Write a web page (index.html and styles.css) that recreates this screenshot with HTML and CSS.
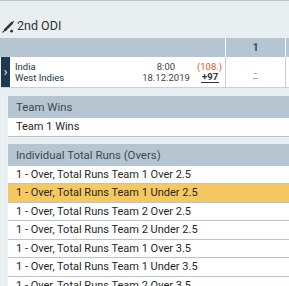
FILE: index.html
```html
<!DOCTYPE html>
<html>
  <head>
    <title>2nd ODI</title>
    <link rel="stylesheet" href="styles.css">
  </head>
  <body>
    <div class="page">
      <div class="title">
        <svg class="bat" width="12" height="12" viewBox="0 0 12 12">
          <path d="M11.4 0.6 L9.6 2.4" stroke="#333" stroke-width="1.2" stroke-linecap="round" />
          <path d="M9.8 2.2 L3.2 8.8" stroke="#333" stroke-width="2.6" stroke-linecap="round" />
          <path d="M2.6 9.4 L0.8 11.2" stroke="#333" stroke-width="1.2" stroke-linecap="round" />
          <circle cx="9.6" cy="10.2" r="1.4" fill="#333" />
        </svg>
        <span>2nd ODI</span>
      </div>

      <div class="table">
        <div class="thead">
          <div class="info"></div>
          <div class="col">1</div>
          <div class="col"></div>
        </div>
        <div class="match">
          <div class="info">
            <div class="strip">&#8250;</div>
            <div class="teams">
              <div>India</div>
              <div>West Indies</div>
            </div>
            <div class="time">
              <div>8:00</div>
              <div>18.12.2019</div>
            </div>
            <div class="extra">
              <div class="count">(108.)</div>
              <div class="more">+97</div>
            </div>
          </div>
          <div class="col"><span class="odd">-</span></div>
          <div class="col"></div>
        </div>
      </div>

      <div class="markets">
        <div class="market">
          <div class="market-head">Team Wins</div>
          <div class="market-row">Team 1 Wins</div>
        </div>

        <div class="market">
          <div class="market-head">Individual Total Runs (Overs)</div>
          <div class="market-row">1 - Over, Total Runs Team 1 Over 2.5</div>
          <div class="market-row selected">1 - Over, Total Runs Team 1 Under 2.5</div>
          <div class="market-row">1 - Over, Total Runs Team 2 Over 2.5</div>
          <div class="market-row">1 - Over, Total Runs Team 2 Under 2.5</div>
          <div class="market-row">1 - Over, Total Runs Team 1 Over 3.5</div>
          <div class="market-row">1 - Over, Total Runs Team 1 Under 3.5</div>
          <div class="market-row">1 - Over, Total Runs Team 2 Over 3.5</div>
        </div>
      </div>
    </div>
  </body>
</html>
```

FILE: styles.css
```css
body {
  margin: 0;
  background-color: #e9eef0;
  font-family: Roboto, "Liberation Sans", Arial, sans-serif;
  color: #333;
  overflow: hidden;
}
.page {
  border-top: 1px solid #b6c6d2;
  width: 360px;
}
.title {
  height: 37px;
  display: flex;
  align-items: flex-end;
  padding-left: 2px;
  box-sizing: border-box;
  padding-bottom: 5px;
  font-size: 12.5px;
}
.bat {
  margin-right: 3px;
}

/* event table */
.thead,
.match {
  display: flex;
}
.thead {
  height: 19px;
  background-color: #b5c6d2;
}
.info {
  flex: 0 0 225px;
  display: flex;
  align-items: center;
}
.col {
  flex: 0 0 59px;
  border-left: 1px solid #fff;
  display: flex;
  justify-content: center;
  align-items: center;
  font-size: 10px;
  font-weight: bold;
  color: #2e4656;
}
.match {
  height: 30px;
  background-color: #fff;
  border-bottom: 1px solid #c4d2dc;
  margin-left: 1px;
}
.match .info {
  flex-basis: 224px;
}
.match .col {
  border-left-color: #c4d2dc;
}
.strip {
  width: 9px;
  height: 100%;
  background-color: #1f3a50;
  color: #fff;
  font-size: 12px;
  display: flex;
  align-items: center;
  justify-content: center;
}
.teams {
  flex: 1;
  padding-left: 5px;
  font-size: 9.5px;
  line-height: 11px;
  color: #24323c;
}
.time {
  width: 52px;
  text-align: center;
  font-size: 9.5px;
  line-height: 11px;
  color: #444;
}
.extra {
  width: 33px;
  padding-left: 5px;
  box-sizing: border-box;
  font-size: 9.5px;
  line-height: 10px;
}
.count {
  color: #e2542c;
}
.more {
  display: inline-block;
  margin-left: 4px;
  padding: 0 1px;
  border-bottom: 1px solid #333;
  font-weight: bold;
  color: #333;
}
.odd {
  display: inline-block;
  width: 5px;
  text-align: center;
  line-height: 9px;
  margin-top: 3px;
  font-size: 11px;
  font-weight: normal;
  color: #e0702c;
  border-bottom: 1px solid #e39a60;
}

/* markets */
.markets {
  margin-top: 8px;
  margin-left: 2px;
  padding-left: 5px;
  border-left: 1px solid #f3f6f8;
}
.market {
  margin-bottom: 7px;
}
.market-head {
  height: 22px;
  line-height: 22px;
  padding-left: 8px;
  background-color: #b5c6d2;
  font-size: 11.4px;
  color: #3c4850;
}
.market-row {
  height: 17.5px;
  line-height: 17.5px;
  padding-left: 8px;
  background-color: #fff;
  border-bottom: 1px solid #b5c6d2;
  font-size: 11px;
  color: #262626;
}
.market-row.selected {
  background-color: #f5c95f;
}
```
